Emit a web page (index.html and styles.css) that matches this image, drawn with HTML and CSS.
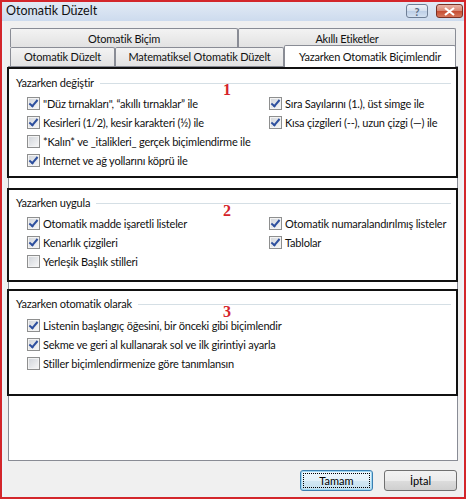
FILE: index.html
```html
<!DOCTYPE html>
<html lang="tr">
<head>
  <meta charset="UTF-8">
  <title>Otomatik Düzelt</title>
  <link rel="stylesheet" href="styles.css">
</head>
<body>

  <div class="window">
    <div class="titlebar">
      <span class="title">Otomatik Düzelt</span>
      <div class="caption">
        <span class="cap help">?</span>
        <span class="cap close">
          <svg width="13" height="9" viewBox="0 0 13 9"><path d="M2 1 L11 8 M11 1 L2 8" stroke="#fff" stroke-width="2.2" fill="none"/></svg>
        </span>
      </div>
    </div>

    <div class="client">
      <div class="tabs">
        <div class="tab-row">
          <div class="tab" style="width:228px">Otomatik Biçim</div>
          <div class="tab" style="width:218px">Akıllı Etiketler</div>
        </div>
        <div class="tab-row front">
          <div class="tab" style="width:105px">Otomatik Düzelt</div>
          <div class="tab" style="width:169px">Matematiksel Otomatik Düzelt</div>
          <div class="tab active" style="width:172px">Yazarken Otomatik Biçimlendir</div>
        </div>
      </div>

      <div class="panel">
        <section class="group g1">
          <div class="legend">Yazarken değiştir</div>
          <div class="options">
            <div class="col left">
              <label class="opt on"><span class="box"></span>"Düz tırnakları", “akıllı tırnaklar” ile</label>
              <label class="opt on"><span class="box"></span>Kesirleri (1/2), kesir karakteri (½) ile</label>
              <label class="opt"><span class="box"></span>*Kalın* ve _italikleri_ gerçek biçimlendirme ile</label>
              <label class="opt on"><span class="box"></span>Internet ve ağ yollarını köprü ile</label>
            </div>
            <div class="col">
              <label class="opt on"><span class="box"></span>Sıra Sayılarını (1.), üst simge ile</label>
              <label class="opt on"><span class="box"></span>Kısa çizgileri (--), uzun çizgi (—) ile</label>
            </div>
          </div>
          <span class="mark">1</span>
        </section>

        <section class="group g2">
          <div class="legend">Yazarken uygula</div>
          <div class="options">
            <div class="col left">
              <label class="opt on"><span class="box"></span>Otomatik madde işaretli listeler</label>
              <label class="opt on"><span class="box"></span>Kenarlık çizgileri</label>
              <label class="opt"><span class="box"></span>Yerleşik Başlık stilleri</label>
            </div>
            <div class="col">
              <label class="opt on"><span class="box"></span>Otomatik numaralandırılmış listeler</label>
              <label class="opt on"><span class="box"></span>Tablolar</label>
            </div>
          </div>
          <span class="mark">2</span>
        </section>

        <section class="group g3">
          <div class="legend">Yazarken otomatik olarak</div>
          <div class="options">
            <div class="col left">
              <label class="opt on"><span class="box"></span>Listenin başlangıç öğesini, bir önceki gibi biçimlendir</label>
              <label class="opt on"><span class="box"></span>Sekme ve geri al kullanarak sol ve ilk girintiyi ayarla</label>
              <label class="opt"><span class="box"></span>Stiller biçimlendirmenize göre tanımlansın</label>
            </div>
          </div>
          <span class="mark">3</span>
        </section>
      </div>

      <div class="footer">
        <button class="btn default"><span>Tamam</span></button>
        <button class="btn">İptal</button>
      </div>
    </div>
  </div>

</body>
</html>
```

FILE: styles.css
```css
* {
  box-sizing: border-box;
}

body {
  margin: 0;
  background: #fff;
  font-family: Lato, "Liberation Sans", sans-serif;
  font-size: 11px;
  letter-spacing: -0.2px;
  color: #111;
}

.window {
  width: 466px;
  height: 499px;
  border: 2px solid #d3262b;
  background: #eef3fa;
  display: flex;
  flex-direction: column;
}

/* title bar */
.titlebar {
  height: 19px;
  display: flex;
  justify-content: space-between;
  background: linear-gradient(#e2eaf5, #cddbee);
  padding-left: 4px;
}

.title {
  font-size: 12.5px;
  line-height: 18px;
  letter-spacing: 0;
}

.caption {
  display: flex;
  gap: 8px;
  margin: 2px 1px 0 0;
}

.cap {
  height: 14px;
  border: 1px solid #6f7f96;
  border-radius: 3px;
  display: flex;
  align-items: center;
  justify-content: center;
}

.help {
  width: 22px;
  background: linear-gradient(#eef3f9, #d3dfee 50%, #bccee6 50%, #d4e1f1);
  color: #5a6a80;
  font-weight: bold;
  font-size: 11px;
}

.close {
  width: 27px;
  border-color: #7a3024;
  background: linear-gradient(#eab3a6, #d88571 50%, #c44a30 50%, #d7775c);
}

/* client area */
.client {
  flex: 1;
  margin: 0 2px;
  background: #f0f0f0;
  padding: 7px 4px 0;
}

.tabs {
  margin-left: 2px;
}

.tab-row {
  display: flex;
  height: 19px;
}

.tab {
  height: 19px;
  border: 1px solid #898c95;
  border-bottom: none;
  border-radius: 2px 2px 0 0;
  background: linear-gradient(#f3f3f3, #e2e2e2);
  text-align: center;
  line-height: 19px;
}

.tab-row.front .tab {
  line-height: 18px;
}

.tab-row.front .tab.active {
  height: 22px;
  margin-top: -2px;
  margin-bottom: -1px;
  background: #fff;
  position: relative;
  z-index: 2;
  line-height: 22px;
}

.panel {
  height: 395px;
  border: 1px solid #898c95;
  background: #fff;
  position: relative;
  z-index: 1;
}

/* option groups */
.group {
  position: relative;
  border: 2px solid #111;
  margin: 0 -1px 0 -2px;
  padding: 6px 5px 0 7px;
}

.g1 {
  height: 111px;
  padding-top: 7px;
}

.g2 {
  height: 94px;
  margin-top: 10px;
}

.g3 {
  height: 107px;
  margin-top: 7px;
}

.legend {
  display: flex;
  align-items: center;
  gap: 6px;
  height: 14px;
  line-height: 14px;
}

.legend::after {
  content: "";
  flex: 1;
  border-top: 1px solid #d5dfe5;
}

.options {
  display: flex;
  margin: 4px 0 0 11px;
}

.g3 .options {
  margin-top: 5px;
}

.col.left {
  width: 242px;
}

.opt {
  display: flex;
  align-items: center;
  gap: 3px;
  height: 19px;
  white-space: nowrap;
}

.box {
  flex: none;
  width: 13px;
  height: 13px;
  border: 1px solid #8e8f8f;
  background: linear-gradient(135deg, #cfd3d9, #f8f8f8);
  box-shadow: inset 0 0 0 1px #f3f3f3;
  display: flex;
  align-items: center;
  justify-content: center;
}

.opt.on .box::after {
  content: "";
  width: 3px;
  height: 7px;
  margin-top: -2px;
  border: solid #2d4f9e;
  border-width: 0 2px 2px 0;
  transform: rotate(40deg);
}

.mark {
  position: absolute;
  left: 214px;
  top: 13px;
  font: bold 16px/16px "Liberation Serif", serif;
  letter-spacing: 0;
  color: #d5232a;
}

/* buttons */
.footer {
  display: flex;
  justify-content: flex-end;
  gap: 11px;
  margin: 9px 1px 0 0;
}

.btn {
  width: 73px;
  height: 21px;
  padding: 0;
  border: 1px solid #707070;
  border-radius: 3px;
  background: linear-gradient(#f2f2f2, #ebebeb 50%, #dddddd 50%, #cfcfcf);
  font: inherit;
  color: #000;
}

.btn.default {
  border-color: #3c7fb1;
  box-shadow: inset 0 0 0 1px #9fd8f3;
  background: linear-gradient(#eef7fc, #e3f1f9 50%, #d2e8f4 50%, #c6e0ef);
}

.btn.default span {
  display: block;
  margin: 2px;
  height: 15px;
  line-height: 13px;
  border: 1px dotted #000;
}
```
